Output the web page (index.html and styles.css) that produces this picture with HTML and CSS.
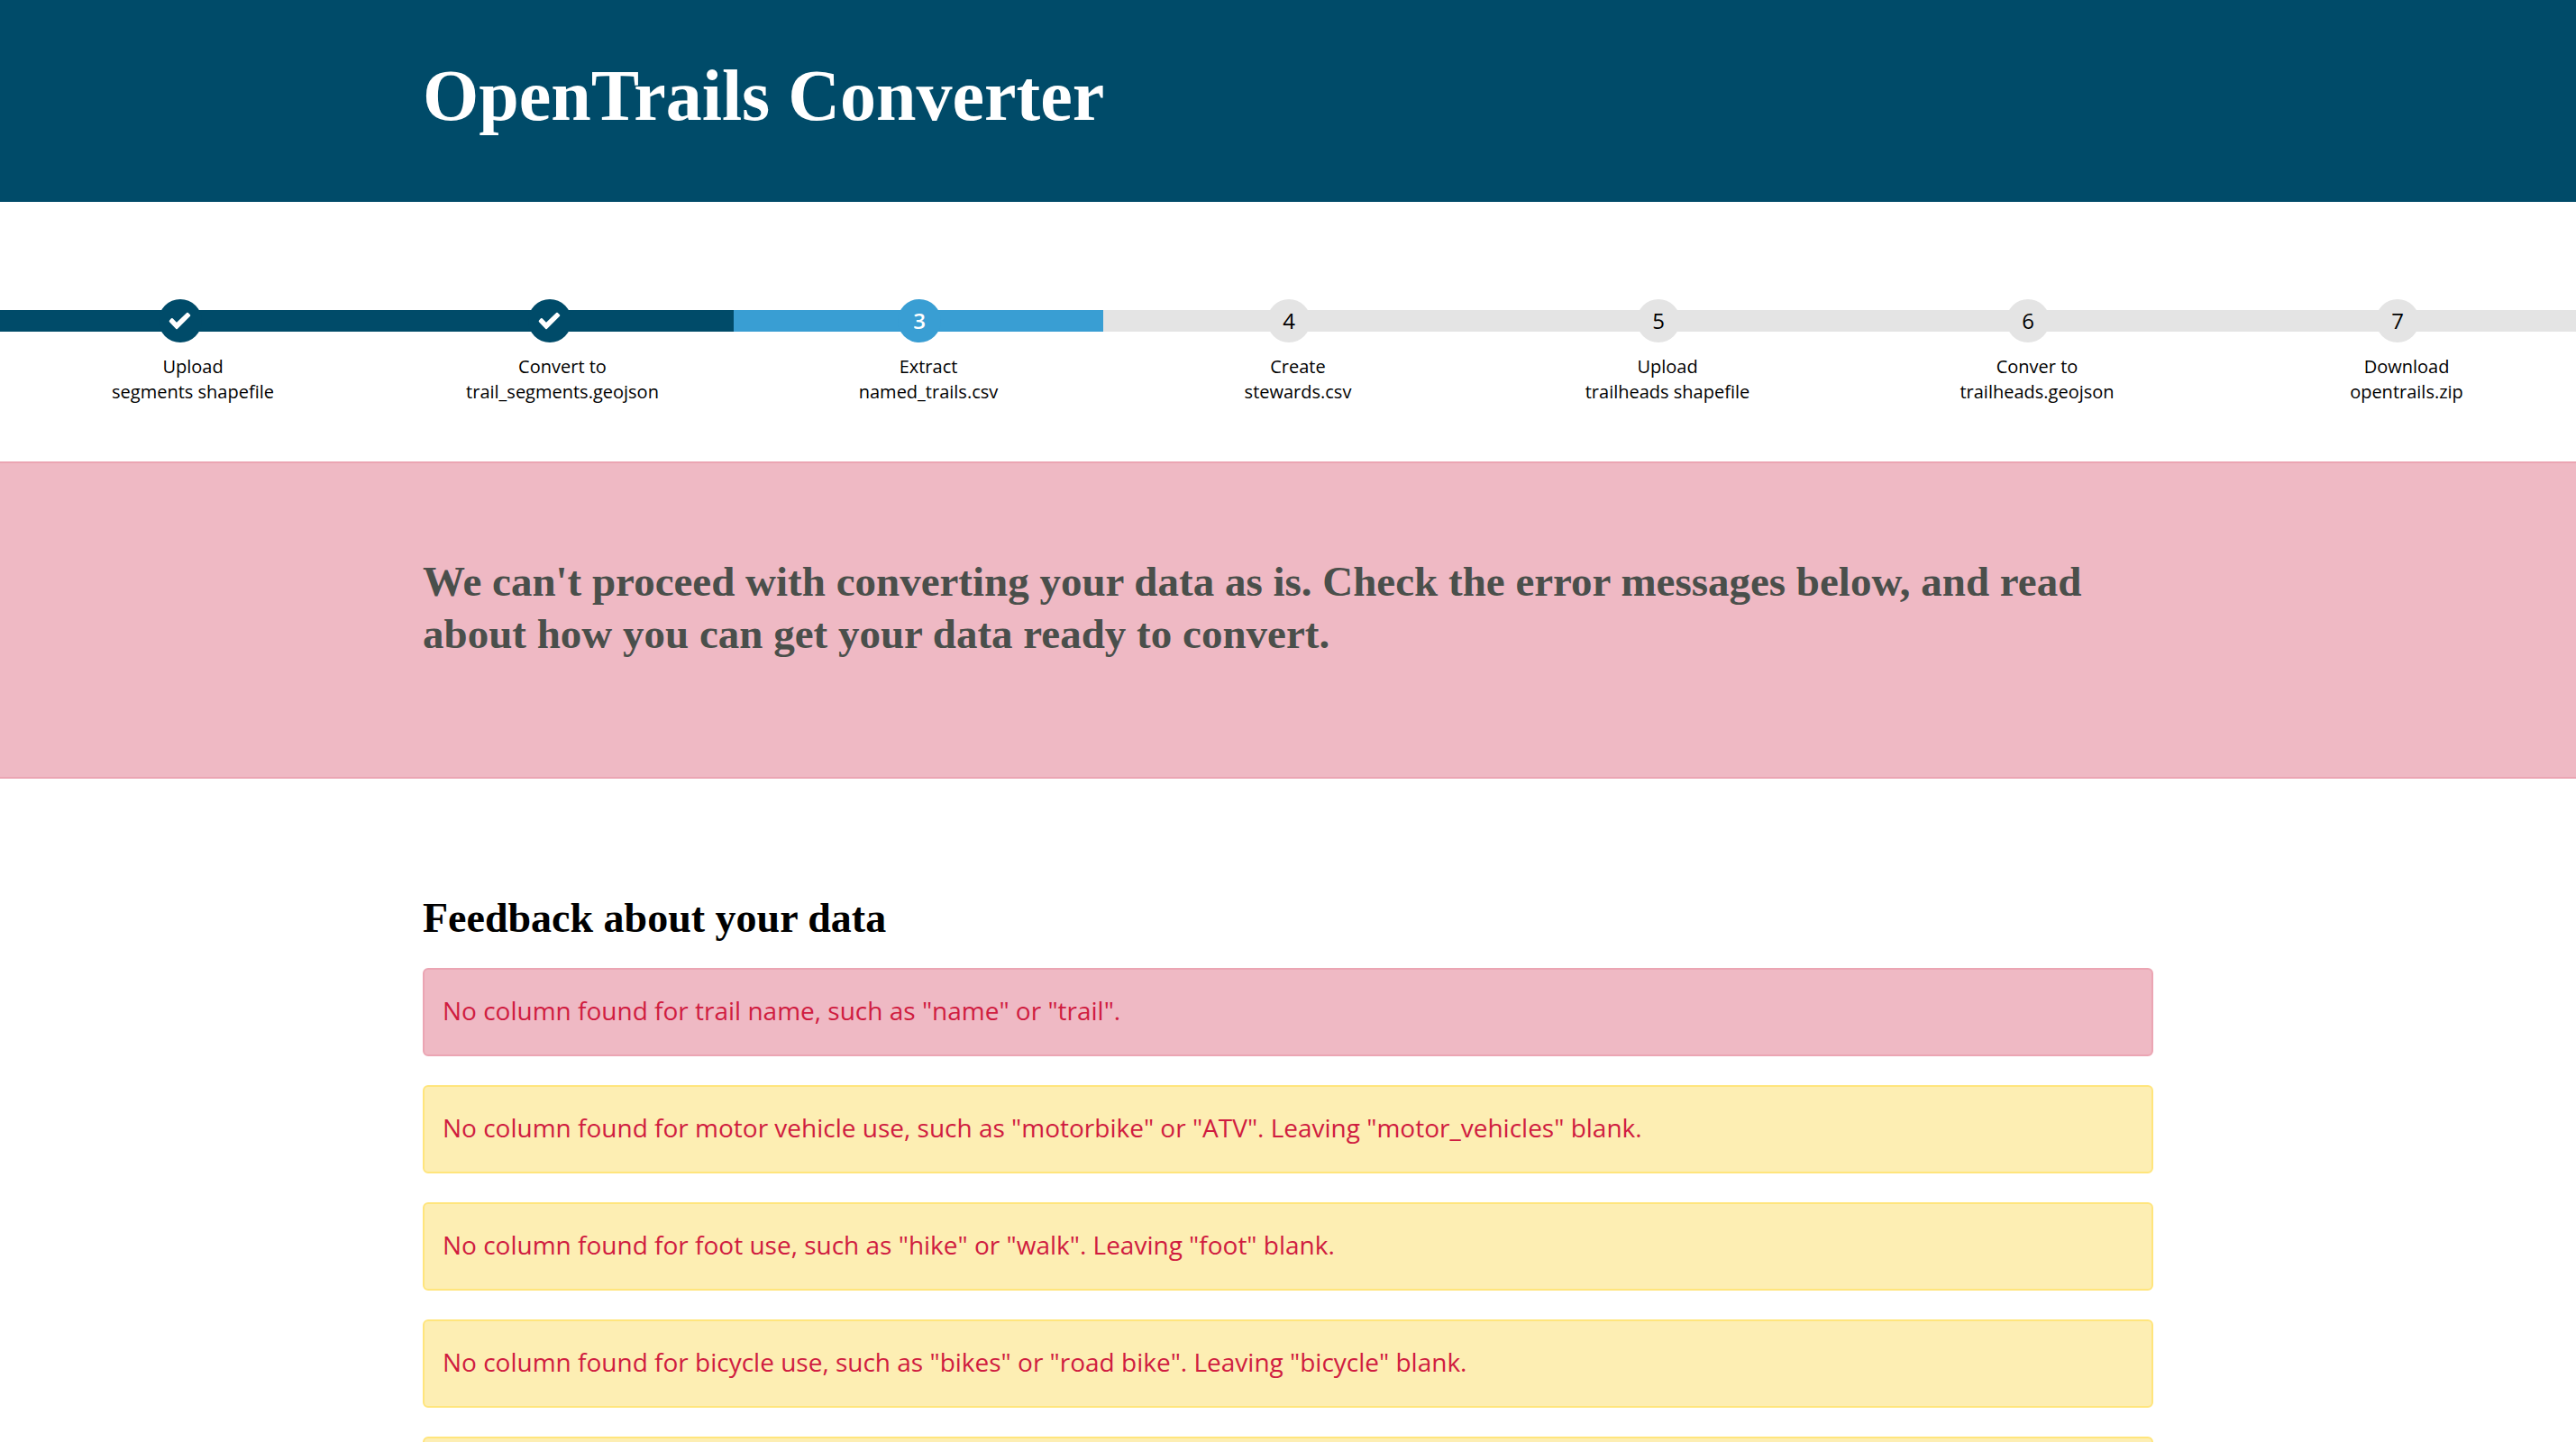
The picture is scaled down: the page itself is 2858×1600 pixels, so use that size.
FILE: index.html
```html
<!DOCTYPE html>
<html lang="en">
<head>
  <meta charset="utf-8">
  <meta name="viewport" content="width=device-width, initial-scale=1">
  <title>OpenTrails Converter</title>
  <link rel="stylesheet" href="styles.css">
</head>
<body>
  <header class="masthead">
    <div class="container">
      <h1 class="masthead-title">OpenTrails Converter</h1>
    </div>
  </header>

  <nav class="progress">
    <ol class="steps">
      <li class="step step-done">
        <div class="step-track"><span class="step-marker"><svg class="step-check" viewBox="0 0 48 48" aria-hidden="true"><path d="M12 23.5 L14 21.3 Q14.8 20.6 15.6 21.3 L20 25.8 L31.2 15 Q32 14.3 32.8 15 L35 17.2 Q35.6 18 35 18.8 L20.8 33 Q20 33.7 19.3 33 L12 25.3 Q11.3 24.4 12 23.5 Z"/></svg></span></div>
        <p class="step-label">Upload <br>segments shapefile</p>
      </li>
      <li class="step step-done">
        <div class="step-track"><span class="step-marker"><svg class="step-check" viewBox="0 0 48 48" aria-hidden="true"><path d="M12 23.5 L14 21.3 Q14.8 20.6 15.6 21.3 L20 25.8 L31.2 15 Q32 14.3 32.8 15 L35 17.2 Q35.6 18 35 18.8 L20.8 33 Q20 33.7 19.3 33 L12 25.3 Q11.3 24.4 12 23.5 Z"/></svg></span></div>
        <p class="step-label">Convert to <br>trail_segments.geojson</p>
      </li>
      <li class="step step-current" aria-current="step">
        <div class="step-track"><span class="step-marker">3</span></div>
        <p class="step-label">Extract <br>named_trails.csv</p>
      </li>
      <li class="step">
        <div class="step-track"><span class="step-marker">4</span></div>
        <p class="step-label">Create <br>stewards.csv</p>
      </li>
      <li class="step">
        <div class="step-track"><span class="step-marker">5</span></div>
        <p class="step-label">Upload <br>trailheads shapefile</p>
      </li>
      <li class="step">
        <div class="step-track"><span class="step-marker">6</span></div>
        <p class="step-label">Conver to <br>trailheads.geojson</p>
      </li>
      <li class="step">
        <div class="step-track"><span class="step-marker">7</span></div>
        <p class="step-label">Download <br>opentrails.zip</p>
      </li>
    </ol>
  </nav>

  <section class="banner">
    <div class="container">
      <h2 class="banner-title">We can't proceed with converting your data as is. Check the error messages below, and read about how you can get your data ready to convert.</h2>
    </div>
  </section>

  <main class="feedback">
    <div class="container">
      <h2 class="feedback-title">Feedback about your data</h2>
      <ul class="messages">
        <li class="message message-error">No column found for trail name, such as "name" or "trail".</li>
        <li class="message">No column found for motor vehicle use, such as "motorbike" or "ATV". Leaving "motor_vehicles" blank.</li>
        <li class="message">No column found for foot use, such as "hike" or "walk". Leaving "foot" blank.</li>
        <li class="message">No column found for bicycle use, such as "bikes" or "road bike". Leaving "bicycle" blank.</li>
        <li class="message"></li>
      </ul>
    </div>
  </main>
</body>
</html>
```
FILE: styles.css
```css
* {
  box-sizing: border-box;
}

html {
  scrollbar-width: none;
}

body {
  margin: 0;
  background: #fff;
  color: #000;
  font: 28px/40px "Open Sans", "Noto Sans", sans-serif;
}

h1,
h2,
p,
ol,
ul {
  margin: 0;
  padding: 0;
}

ol,
ul {
  list-style: none;
}

h1,
h2 {
  font-family: "Liberation Serif", "Times New Roman", serif;
  font-weight: bold;
}

.container {
  max-width: 1920px;
  margin: 0 auto;
}

/* Page header */
.masthead {
  padding: 58px 0 70px;
  background: #004b69;
}

.masthead-title {
  color: #fff;
  font-size: 80px;
  line-height: 96px;
}

/* Progress steps: the track bleeds slightly past both window edges */
.progress {
  padding: 108px 0 63px;
  overflow: hidden;
}

.steps {
  display: grid;
  grid-template-columns: repeat(7, minmax(0, 1fr));
  margin: 0 -6px;
}

.step {
  --step-color: #e4e4e4;
  display: flex;
  flex-direction: column;
  gap: 13px;
  text-align: center;
}

.step-done {
  --step-color: #004b69;
}

.step-current {
  --step-color: #399ed3;
}

.step-track {
  display: flex;
  justify-content: center;
  padding-left: 2px;
  background: linear-gradient(var(--step-color), var(--step-color)) center / 100% 24px no-repeat;
}

.step-marker {
  display: flex;
  align-items: center;
  justify-content: center;
  width: 48px;
  height: 48px;
  border-radius: 50%;
  background: var(--step-color);
  font-size: 24px;
  line-height: 48px;
}

.step-current .step-marker {
  color: #fff;
  font-weight: 600;
}

.step-check {
  width: 48px;
  height: 48px;
  fill: #fff;
}

.step-label {
  padding-left: 22px;
  font-size: 20px;
  line-height: 28px;
}

.step-done .step-label {
  padding-left: 30px;
}

/* Error banner */
.banner {
  padding: 102px 0 130px;
  border: solid #eba5b3;
  border-width: 2px 0;
  background: #efb9c4;
}

.banner-title {
  color: #4a4f4b;
  font-size: 47px;
  line-height: 58px;
}

/* Feedback list */
.feedback {
  padding: 126px 0;
}

.feedback-title {
  font-size: 46px;
  line-height: 58px;
}

.messages {
  display: grid;
  gap: 32px;
  margin-top: 26px;
}

.message {
  min-height: 98px;
  padding: 25px 20px 29px;
  border: 2px solid #ffe57c;
  border-radius: 6px;
  background: #fdeeb3;
  color: #d01c40;
}

.message-error {
  border-color: #eba5b3;
  background: #efb9c4;
}
```
